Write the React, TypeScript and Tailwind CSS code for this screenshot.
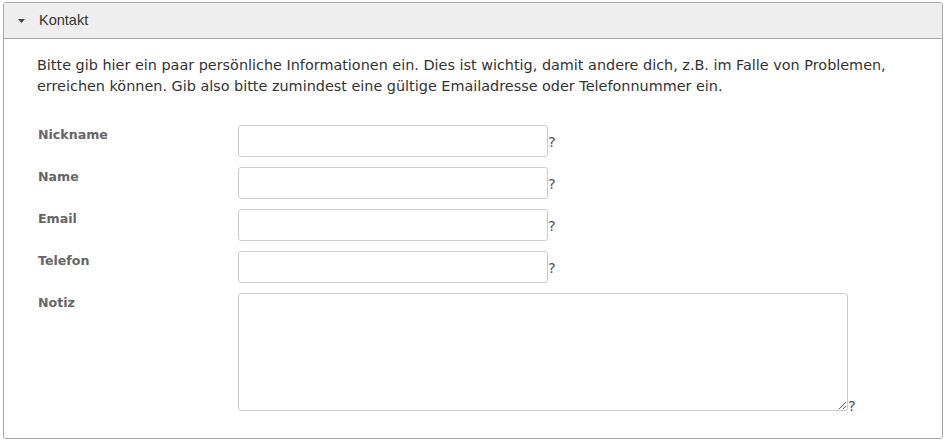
export default function App() {
  const fields = ['Nickname', 'Name', 'Email', 'Telefon']

  return (
    <div className="w-[947px] h-[441px] bg-white pt-[2px] pl-[3px] font-[DejaVu_Sans,Verdana,sans-serif]">
      <div className="w-[940px] h-[437px] border border-[#aaaaaa] rounded-[3px] overflow-hidden">
        <div className="h-[36px] bg-[#eeeeee] border-b border-[#aaaaaa] flex items-center pl-[14px]">
          <svg width="7" height="4" viewBox="0 0 7 4" className="mr-[14px]">
            <path d="M0 0 L7 0 L3.5 4 Z" fill="#444" />
          </svg>
          <span className="text-[14.5px] text-[#333] font-[Liberation_Sans,Arial,sans-serif]">Kontakt</span>
        </div>

        <div className="pl-[33px] pr-[20px] pt-[16px] text-[#333]">
          <p className="text-[14.4px] leading-[21px]">
            Bitte gib hier ein paar persönliche Informationen ein. Dies ist wichtig, damit andere dich, z.B. im Falle von Problemen, erreichen können. Gib also bitte zumindest eine gültige Emailadresse oder Telefonnummer ein.
          </p>

          <div className="mt-[28px] flex flex-col gap-[10px]">
            {fields.map((f) => (
              <div key={f} className="flex">
                <label className="w-[201px] shrink-0 text-[12.6px] font-bold text-[#666] pt-[1px] pl-[1px]">{f}</label>
                <div className="text-[14.6px]">
                  <input
                    type="text"
                    className="w-[310px] h-[32px] border border-[#cccccc] rounded-[3px] align-baseline px-2 outline-none"
                  />
                  <span className="text-[#555]">?</span>
                </div>
              </div>
            ))}
            <div className="flex">
              <label className="w-[201px] shrink-0 text-[12.6px] font-bold text-[#666] pt-[1px] pl-[1px]">Notiz</label>
              <div className="text-[14.6px] leading-none">
                <textarea className="w-[610px] h-[118px] border border-[#cccccc] rounded-[3px] align-baseline p-1 outline-none" />
                <span className="text-[#555]">?</span>
              </div>
            </div>
          </div>
        </div>
      </div>
    </div>
  )
}
